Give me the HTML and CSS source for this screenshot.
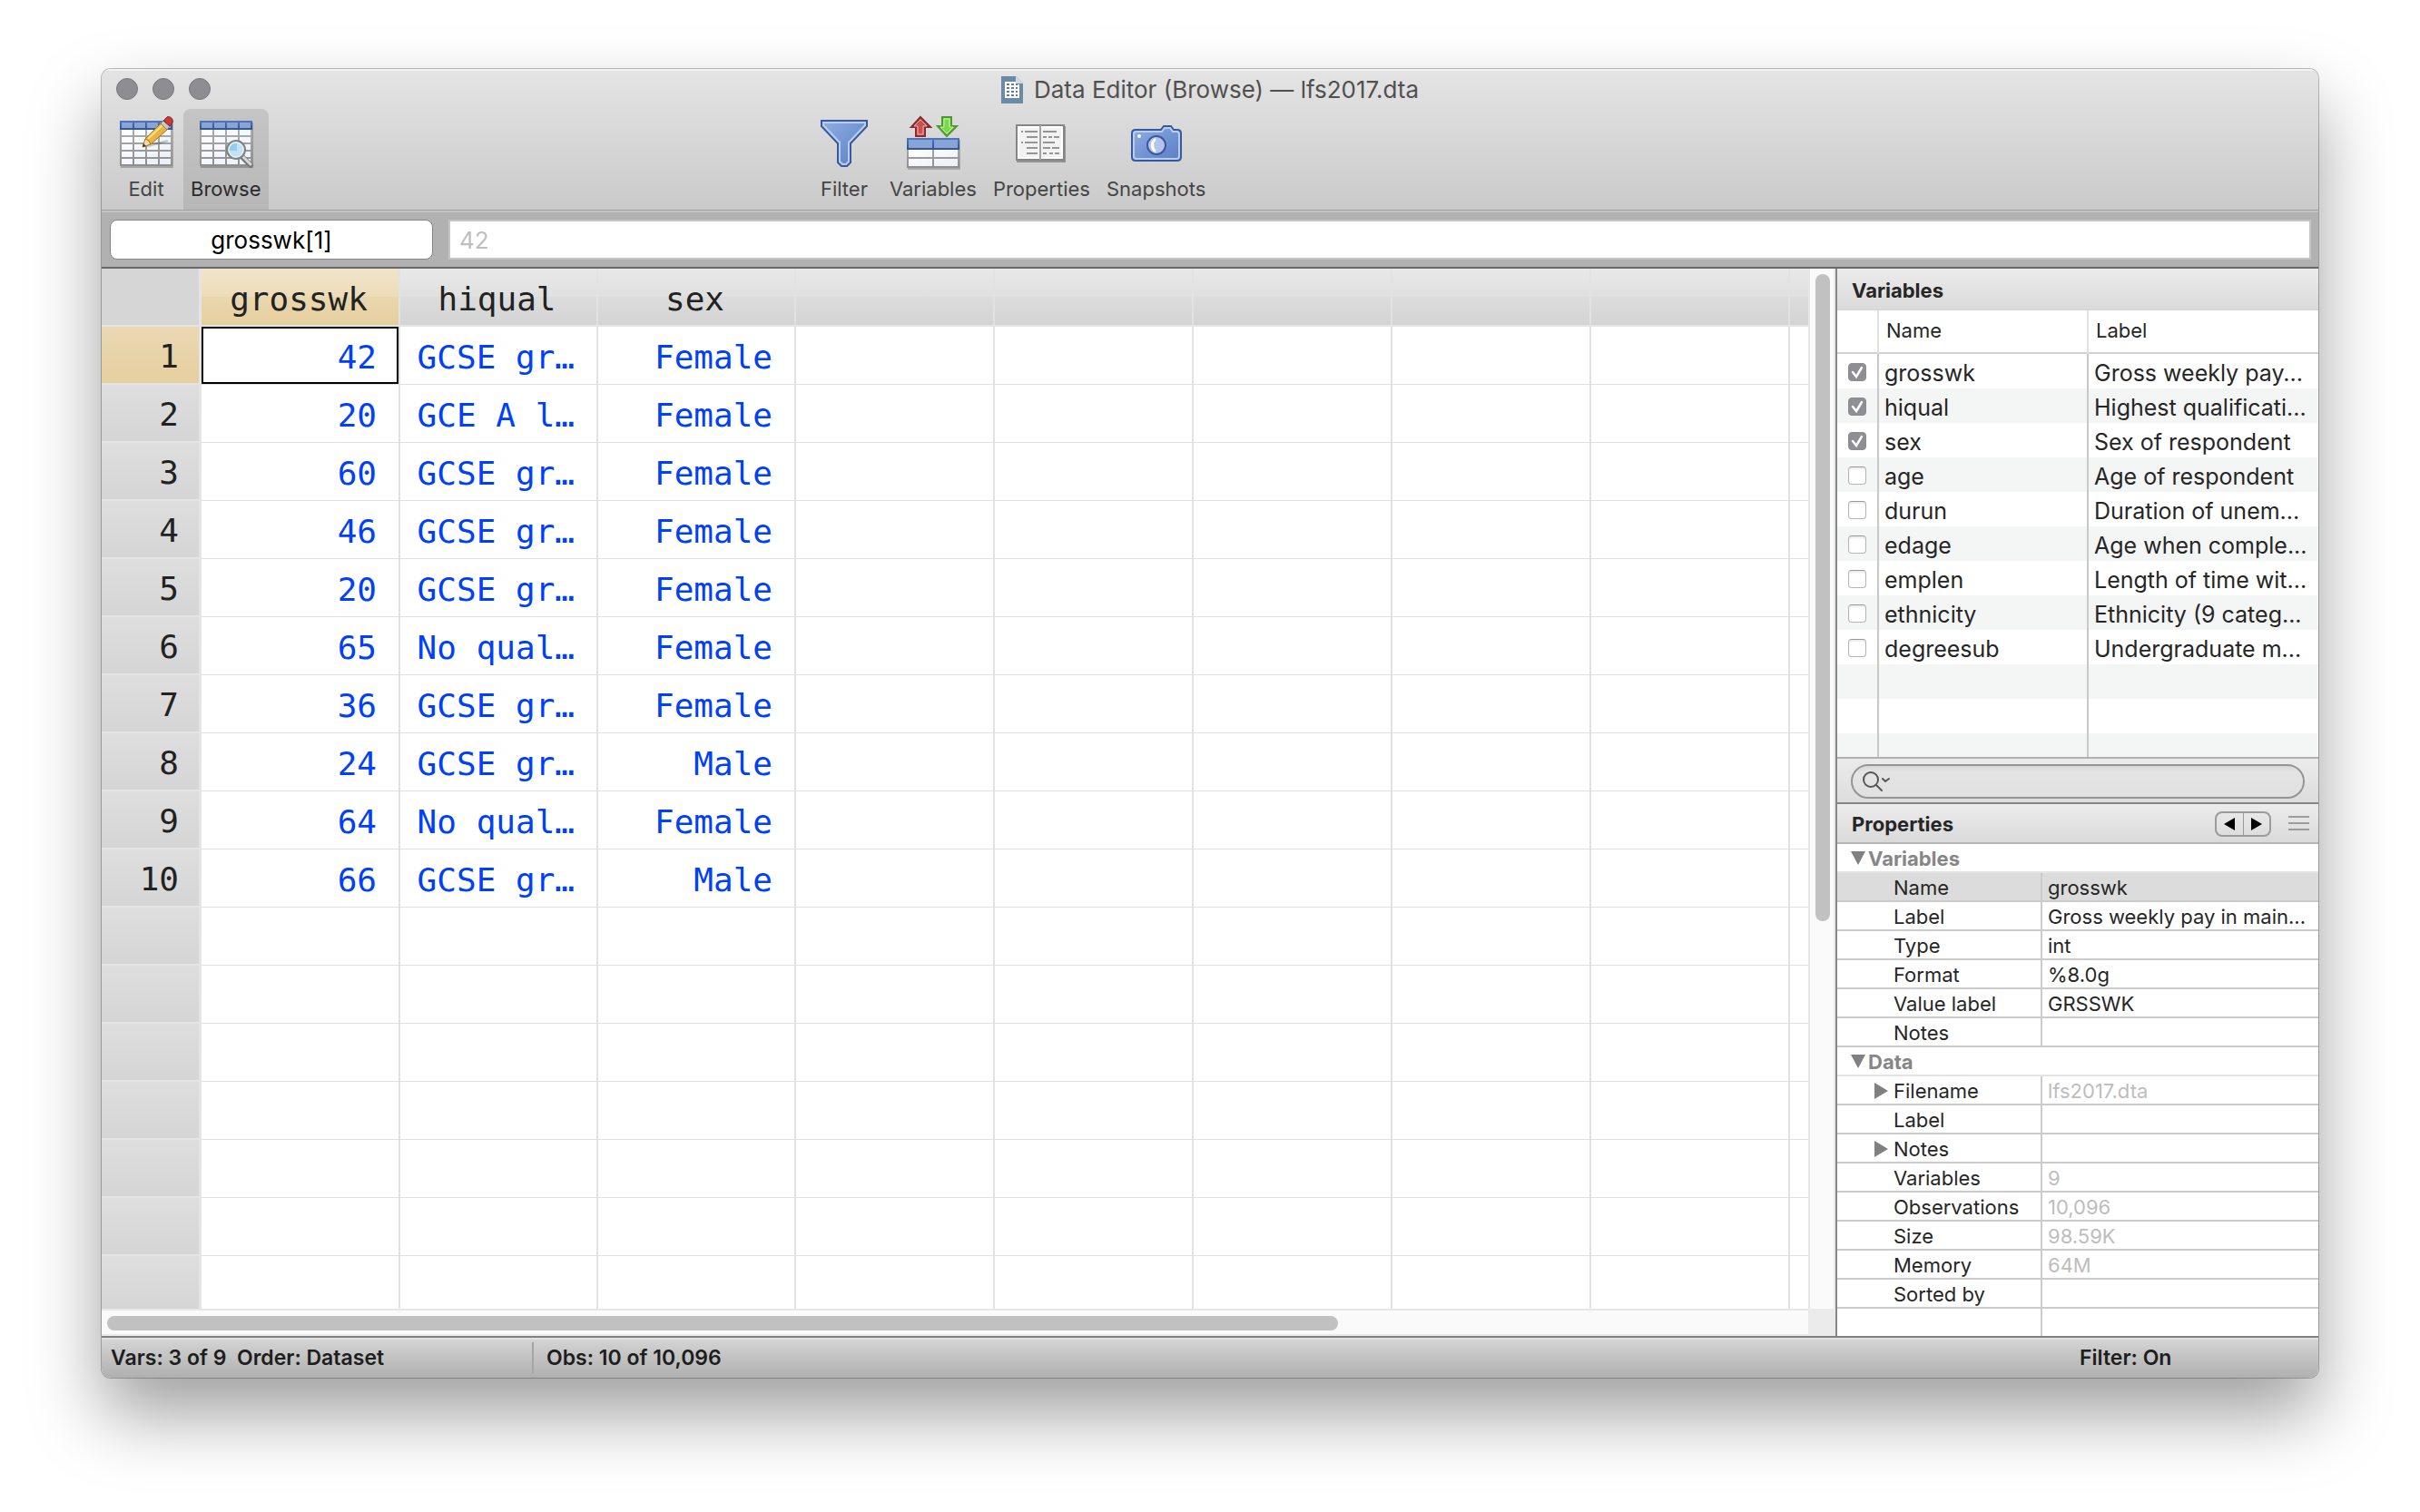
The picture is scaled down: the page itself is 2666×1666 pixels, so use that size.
FILE: index.html
```html
<!DOCTYPE html>
<html lang="en">
<head>
<meta charset="utf-8">
<title>Data Editor (Browse) — lfs2017.dta</title>
<link rel="stylesheet" href="styles.css">
</head>
<body>
<svg width="0" height="0" class="defs" aria-hidden="true">
  <defs>
    <linearGradient id="blue" x1="0" y1="0" x2="1" y2="1"><stop offset="0" stop-color="#8fafe4"/><stop offset="1" stop-color="#5a7cc4"/></linearGradient>
    <linearGradient id="cell" x1="0" y1="0" x2="1" y2="1"><stop offset="0" stop-color="#ffffff"/><stop offset="1" stop-color="#eaeff8"/></linearGradient>
    <linearGradient id="frame" x1="0" y1="0" x2="0" y2="1"><stop offset="0" stop-color="#b4b4b4"/><stop offset="1" stop-color="#8e8e8e"/></linearGradient>
    <linearGradient id="head" x1="0" y1="0" x2="0" y2="1"><stop offset="0" stop-color="#5476bd"/><stop offset="1" stop-color="#2d4f9d"/></linearGradient>
    <symbol id="sheet" viewBox="0 0 64 64">
      <rect x="4" y="11" width="58" height="50" fill="#000" opacity=".22"/>
      <rect x="3" y="9" width="58" height="50" fill="url(#frame)"/>
      <rect x="3" y="9" width="58" height="10" fill="url(#head)"/>
      <path d="M5 11h12v6H5zM19 11h12v6H19zM33 11h12v6H33zM47 11h12v6H47z" fill="#86a4d6"/>
      <path d="M5 19h12v6H5zM19 19h12v6H19zM33 19h12v6H33zM47 19h12v6H47zM5 27h12v6H5zM19 27h12v6H19zM33 27h12v6H33zM47 27h12v6H47zM5 35h12v6H5zM19 35h12v6H19zM33 35h12v6H33zM47 35h12v6H47zM5 43h12v6H5zM19 43h12v6H19zM33 43h12v6H33zM47 43h12v6H47zM5 51h12v6H5zM19 51h12v6H19zM33 51h12v6H33zM47 51h12v6H47z" fill="url(#cell)"/>
    </symbol>
  </defs>
</svg>

<main class="window">
  <header class="chrome">
    <div class="titlebar">
      <div class="lights"><button class="light" aria-label="Close"></button><button class="light" aria-label="Minimize"></button><button class="light" aria-label="Zoom"></button></div>
      <h1 class="title">
        <svg width="24" height="30" viewBox="0 0 24 30" aria-hidden="true"><path d="M0 0h16l8 8v22H0z" fill="#6a8ba7"/><path d="M16 0l8 8h-8z" fill="#d5dde4"/><path d="M4 6h12v3h4v15H4z" fill="#fff"/><path d="M6 9h3M11 9h3M16 9h2M6 13h3M11 13h3M16 13h2M6 17h3M11 17h3M16 17h2M6 21h3M11 21h3M16 21h2" stroke="#5f7f9b" stroke-width="2"/></svg>
        <span>Data Editor (Browse) — lfs2017.dta</span>
      </h1>
    </div>
    <nav class="toolbar">
      <button class="tool tool-edit">
        <svg class="icon" viewBox="0 0 64 64" aria-hidden="true"><use href="#sheet"/>
          <path d="M29 37l26-7 2 2-22 6z" fill="#000" opacity=".2"/>
          <path d="M28 38l3-9 4 1 2 5z" fill="#f3dfa0" stroke="#a07a28"/>
          <path d="M28 38l1-4 3 3z" fill="#4a3a1a"/>
          <path d="M31 29l17-17 7 7-18 16-2-4z" fill="#e9b43f" stroke="#a8761c"/>
          <path d="M34 29l16-15" stroke="#fbe08e" stroke-width="2"/>
          <path d="M48 12l3-3 7 6-3 4z" fill="#c9c9c9" stroke="#808080"/>
          <path d="M51 9l4-4c3-2 8 3 6 6l-3 4z" fill="#c63a3a" stroke="#8b1f22"/>
        </svg>
        <span>Edit</span>
      </button>
      <button class="tool tool-active" aria-pressed="true">
        <svg class="icon" viewBox="0 0 64 64" aria-hidden="true"><use href="#sheet"/>
          <path d="M50 49l9 9" stroke="#777" stroke-width="6" stroke-linecap="round"/>
          <path d="M50 48l9 9" stroke="#d8d8d8" stroke-width="3" stroke-linecap="round"/>
          <circle cx="43" cy="41" r="10" fill="#c3e3f5" stroke="#808080" stroke-width="2"/>
          <circle cx="43" cy="41" r="8" fill="none" stroke="#eef5fa" stroke-width="1"/>
          <path d="M36 42a7 7 0 0 1 8-8v8z" fill="#93cdee"/>
        </svg>
        <span>Browse</span>
      </button>
      <div class="space-lead"></div>
      <button class="tool">
        <svg class="icon" viewBox="0 0 64 64" aria-hidden="true">
          <path d="M7 9h50v6L39 34v21l-4 4h-6l-4-4V34L7 15z" fill="url(#blue)" stroke="#38599f" stroke-width="2"/>
          <path d="M9 11h46v3L37 33v21l-3 3h-4l-3-3V33L9 14z" fill="none" stroke="#b9cdf0" stroke-width="2"/>
        </svg>
        <span>Filter</span>
      </button>
      <button class="tool">
        <svg class="icon" viewBox="0 0 64 64" aria-hidden="true">
          <path d="M18 5L29 16h-6v10H13V16H8z" fill="#d85a5a" stroke="#8a2a2c" stroke-width="2"/><path d="M18 8l7 7h-4v9h-6v-9h-4z" fill="#c8504f" stroke="#f0b0b0"/>
          <path d="M47 26L58 15h-6V5H42v10h-5z" fill="#7fdc4f" stroke="#4f9a2c" stroke-width="2"/><path d="M47 23l7-7h-4V7h-6v9h-4z" fill="#79d94b" stroke="#c7f5a8"/>
          <rect x="4" y="30" width="58" height="33" fill="#000" opacity=".2"/>
          <rect x="3" y="28" width="58" height="33" fill="url(#frame)"/><rect x="3" y="28" width="58" height="13" fill="url(#head)"/>
          <path d="M5 30h26v9H5zM33 30h26v9H33z" fill="#86a4d6"/><path d="M5 41h26v8H5zM33 41h26v8H33zM5 51h26v8H5zM33 51h26v8H33z" fill="url(#cell)"/>
        </svg>
        <span>Variables</span>
      </button>
      <button class="tool">
        <svg class="icon" viewBox="0 0 64 64" aria-hidden="true">
          <rect x="5" y="15" width="54" height="40" fill="#000" opacity=".3"/>
          <rect x="5" y="14" width="52" height="38" fill="#f2f2f2" stroke="#858585" stroke-width="2"/><rect x="7" y="16" width="48" height="34" fill="none" stroke="#fff" stroke-width="2"/>
          <path d="M31 14v38" stroke="#a5a5a5" stroke-width="2"/>
          <path d="M10 21h2M14 21h14M16 27h12M10 33h2M14 33h14M16 39h12M16 45h12M34 21h15M34 27h4M40 27h4M46 27h6M34 33h13M34 39h8M44 39h8M34 45h4M41 45h4M47 45h5" stroke="#959595" stroke-width="2"/>
        </svg>
        <span>Properties</span>
      </button>
      <button class="tool">
        <svg class="icon" viewBox="0 0 64 64" aria-hidden="true">
          <path d="M9 19h28l3-4h8l3 4h4q4 0 4 4v26q0 4-4 4H9q-4 0-4-4V23q0-4 4-4z" fill="url(#blue)" stroke="#38599f" stroke-width="2"/>
          <path d="M10 21h28l3-4h6l3 4h4q3 0 3 3v24q0 3-3 3H10q-3 0-3-3V24q0-3 3-3z" fill="none" stroke="#b9cdf0" stroke-width="2"/>
          <circle cx="13" cy="26" r="2" fill="#fff"/><circle cx="32" cy="36" r="10" fill="#b3c6ea" stroke="#38599f" stroke-width="2"/><path d="M31 29a8 8 0 0 0 0 14a10 10 0 0 1 0-14z" fill="#fff" stroke="#fff" stroke-width="2"/>
        </svg>
        <span>Snapshots</span>
      </button>
      <div class="space-trail"></div>
    </nav>
  </header>

  <div class="formula">
    <input class="cell-name" aria-label="Cell" value="grosswk[1]">
    <input class="cell-value" aria-label="Value" value="42" readonly>
  </div>

  <div class="body">
    <section class="grid-area">
      <div class="grid-view">
        <table class="grid">
          <colgroup><col class="col-num"><col class="col-first"><col class="col-data"><col class="col-data"><col class="col-blank" span="6"></colgroup>
          <thead><tr><th></th><th class="selected">grosswk</th><th>hiqual</th><th>sex</th><th></th><th></th><th></th><th></th><th></th><th></th></tr></thead>
          <tbody>
            <tr><th class="selected">1</th><td class="cursor">42</td><td>GCSE gr…</td><td>Female</td><td></td><td></td><td></td><td></td><td></td><td></td></tr>
            <tr><th>2</th><td>20</td><td>GCE A l…</td><td>Female</td><td></td><td></td><td></td><td></td><td></td><td></td></tr>
            <tr><th>3</th><td>60</td><td>GCSE gr…</td><td>Female</td><td></td><td></td><td></td><td></td><td></td><td></td></tr>
            <tr><th>4</th><td>46</td><td>GCSE gr…</td><td>Female</td><td></td><td></td><td></td><td></td><td></td><td></td></tr>
            <tr><th>5</th><td>20</td><td>GCSE gr…</td><td>Female</td><td></td><td></td><td></td><td></td><td></td><td></td></tr>
            <tr><th>6</th><td>65</td><td>No qual…</td><td>Female</td><td></td><td></td><td></td><td></td><td></td><td></td></tr>
            <tr><th>7</th><td>36</td><td>GCSE gr…</td><td>Female</td><td></td><td></td><td></td><td></td><td></td><td></td></tr>
            <tr><th>8</th><td>24</td><td>GCSE gr…</td><td>Male</td><td></td><td></td><td></td><td></td><td></td><td></td></tr>
            <tr><th>9</th><td>64</td><td>No qual…</td><td>Female</td><td></td><td></td><td></td><td></td><td></td><td></td></tr>
            <tr><th>10</th><td>66</td><td>GCSE gr…</td><td>Male</td><td></td><td></td><td></td><td></td><td></td><td></td></tr>
            <tr><th></th><td></td><td></td><td></td><td></td><td></td><td></td><td></td><td></td><td></td></tr>
            <tr><th></th><td></td><td></td><td></td><td></td><td></td><td></td><td></td><td></td><td></td></tr>
            <tr><th></th><td></td><td></td><td></td><td></td><td></td><td></td><td></td><td></td><td></td></tr>
            <tr><th></th><td></td><td></td><td></td><td></td><td></td><td></td><td></td><td></td><td></td></tr>
            <tr><th></th><td></td><td></td><td></td><td></td><td></td><td></td><td></td><td></td><td></td></tr>
            <tr><th></th><td></td><td></td><td></td><td></td><td></td><td></td><td></td><td></td><td></td></tr>
            <tr><th></th><td></td><td></td><td></td><td></td><td></td><td></td><td></td><td></td><td></td></tr>
          </tbody>
        </table>
      </div>
      <div class="track-v"><div class="thumb-v"></div></div>
      <div class="track-h"><div class="thumb-h"></div></div>
      <div class="track-corner"></div>
    </section>

    <aside class="side">
      <h2 class="side-head">Variables</h2>
      <div class="list">
        <table class="vars">
          <colgroup><col class="col-check"><col class="col-name"><col></colgroup>
          <thead><tr><th></th><th><span>Name</span></th><th><span>Label</span></th></tr></thead>
          <tbody>
            <tr><td><input type="checkbox" id="v1" checked></td><td><label for="v1">grosswk</label></td><td>Gross weekly pay...</td></tr>
            <tr><td><input type="checkbox" id="v2" checked></td><td><label for="v2">hiqual</label></td><td>Highest qualificati...</td></tr>
            <tr><td><input type="checkbox" id="v3" checked></td><td><label for="v3">sex</label></td><td>Sex of respondent</td></tr>
            <tr><td><input type="checkbox" id="v4"></td><td><label for="v4">age</label></td><td>Age of respondent</td></tr>
            <tr><td><input type="checkbox" id="v5"></td><td><label for="v5">durun</label></td><td>Duration of unem...</td></tr>
            <tr><td><input type="checkbox" id="v6"></td><td><label for="v6">edage</label></td><td>Age when comple...</td></tr>
            <tr><td><input type="checkbox" id="v7"></td><td><label for="v7">emplen</label></td><td>Length of time wit...</td></tr>
            <tr><td><input type="checkbox" id="v8"></td><td><label for="v8">ethnicity</label></td><td>Ethnicity (9 categ...</td></tr>
            <tr><td><input type="checkbox" id="v9"></td><td><label for="v9">degreesub</label></td><td>Undergraduate m...</td></tr>
            <tr><td></td><td></td><td></td></tr>
            <tr><td></td><td></td><td></td></tr>
            <tr><td></td><td></td><td></td></tr>
          </tbody>
        </table>
      </div>
      <div class="search-bar">
        <label class="search">
          <svg width="32" height="26" viewBox="0 0 32 26" aria-hidden="true" fill="none" stroke="#555" stroke-width="2" stroke-linecap="round"><circle cx="10" cy="11" r="8"/><path d="M16 17l6 6"/><path d="M23 10l3 3 4-3"/></svg>
          <input type="search" aria-label="Search variables">
        </label>
      </div>
      <div class="side-head props-head">
        <h2>Properties</h2>
        <div class="pager">
          <button aria-label="Previous"><svg width="12" height="14" viewBox="0 0 12 14"><path d="M12 0v14L0 7z"/></svg></button><button aria-label="Next"><svg width="12" height="14" viewBox="0 0 12 14"><path d="M0 0v14l12-7z"/></svg></button>
        </div>
        <button class="menu" aria-label="Options"><svg width="23" height="17" viewBox="0 0 23 17"><path d="M0 1h23M0 8h23M0 15h23" stroke="#555"/></svg></button>
      </div>
      <table class="props">
        <colgroup><col class="col-prop"><col></colgroup>
        <tbody>
          <tr class="group"><th colspan="2"><i class="down"></i>Variables</th></tr>
          <tr class="current"><th>Name</th><td>grosswk</td></tr>
          <tr><th>Label</th><td>Gross weekly pay in main...</td></tr>
          <tr><th>Type</th><td>int</td></tr>
          <tr><th>Format</th><td>%8.0g</td></tr>
          <tr><th>Value label</th><td>GRSSWK</td></tr>
          <tr><th>Notes</th><td></td></tr>
          <tr class="group"><th colspan="2"><i class="down"></i>Data</th></tr>
          <tr class="fixed"><th class="nested"><i class="right"></i>Filename</th><td>lfs2017.dta</td></tr>
          <tr class="fixed"><th>Label</th><td></td></tr>
          <tr class="fixed"><th class="nested"><i class="right"></i>Notes</th><td></td></tr>
          <tr class="fixed"><th>Variables</th><td>9</td></tr>
          <tr class="fixed"><th>Observations</th><td>10,096</td></tr>
          <tr class="fixed"><th>Size</th><td>98.59K</td></tr>
          <tr class="fixed"><th>Memory</th><td>64M</td></tr>
          <tr class="fixed"><th>Sorted by</th><td></td></tr>
          <tr class="last"><th></th><td></td></tr>
        </tbody>
      </table>
    </aside>
  </div>

  <footer class="status">
    <span class="status-vars">Vars: 3 of 9  Order: Dataset</span>
    <span class="status-obs">Obs: 10 of 10,096</span>
    <span class="status-filter">Filter: On</span>
  </footer>
</main>
</body>
</html>
```

FILE: styles.css
```css
* { box-sizing: border-box; }

body {
  margin: 0;
  padding: 76px 112px 148px;
  height: 100vh;
  background: #fff;
  color: #262626;
  font: 22px/28px "Inter", sans-serif;
}

.defs { position: absolute; }

button {
  margin: 0;
  padding: 0;
  border: 0;
  background: none;
  color: inherit;
  font: inherit;
}

h1, h2 { margin: 0; }

table {
  border-collapse: separate;
  border-spacing: 0;
  table-layout: fixed;
}

.window {
  display: flex;
  flex-direction: column;
  height: 100%;
  border-radius: 10px;
  overflow: hidden;
  box-shadow: 0 0 0 1px rgba(0, 0, 0, .25), 0 40px 80px rgba(0, 0, 0, .38);
}

/* Title bar and toolbar */
.chrome {
  border-bottom: 1px solid #a0a0a0;
  background: linear-gradient(#e4e4e4, #cacaca);
  box-shadow: inset 0 2px #f2f2f2;
}

.titlebar {
  display: grid;
  grid-template-columns: 1fr auto 1fr;
  align-items: center;
  height: 44px;
}

.lights {
  display: flex;
  gap: 16px;
  padding-left: 16px;
}

.light {
  width: 24px;
  height: 24px;
  border: 1px solid #77767a;
  border-radius: 50%;
  background: #8e8d92;
}

.title {
  display: flex;
  align-items: center;
  gap: 12px;
  padding-top: 2px;
  color: #505050;
  font-size: 26px;
  font-weight: 400;
}

.toolbar {
  display: flex;
  padding: 0 30px 0 8px;
}

.tool {
  display: flex;
  flex-direction: column;
  align-items: center;
  gap: 6px;
  min-width: 78px;
  height: 111px;
  padding: 4px 9px 0;
  border-radius: 8px 8px 0 0;
  color: #454545;
}

.tool-active {
  padding: 4px 8px 0;
  background: linear-gradient(#c5c5c5, #b7b7b7);
  color: #2b2b2b;
}

.icon {
  width: 64px;
  height: 64px;
}

.space-lead { flex: 1; }
.space-trail { flex: 2; }

/* Cell reference and value */
.formula {
  display: flex;
  gap: 17px;
  padding: 8px 8px 8px 9px;
  border-top: 2px solid #c3c3c3;
  border-bottom: 2px solid #686868;
  background: #b1b1b1;
}

.formula input {
  height: 44px;
  outline: 0;
  background: #fff;
  font: 26px/32px "Inter", sans-serif;
}

.cell-name {
  width: 356px;
  border: 1px solid #858585;
  border-radius: 8px;
  color: #000;
  text-align: center;
}

.cell-value {
  flex: 1;
  padding: 0 10px;
  border: 2px solid #c3c3c3;
  color: #bfbfbf;
}

.body {
  display: flex;
  flex: 1;
  min-height: 0;
}

/* Data grid */
.grid-area {
  display: grid;
  flex: 1;
  grid-template: minmax(0, 1fr) 30px / minmax(0, 1fr) 30px;
  min-width: 0;
  background: #fff;
}

.grid-view { overflow: hidden; }

.grid {
  width: 2000px;
  font: 36px/40px "DejaVu Sans Mono", monospace;
}

.col-num { width: 110px; }
.col-first { width: 219px; }
.col-data { width: 218px; }
.col-blank { width: 219px; }

.grid th,
.grid td {
  height: 64px;
  padding: 4px 24px 0 0;
  border-right: 2px solid #e2e2e2;
  text-align: right;
  font-weight: 400;
  white-space: nowrap;
}

.grid td {
  border-bottom: 1px solid #e2e2e2;
  background: #fff;
  color: #0040f8;
}

.grid th {
  padding-right: 22px;
  border-bottom: 2px solid #e4e4e4;
  color: #222;
}

.grid thead th {
  padding: 6px 3px 0 0;
  background: linear-gradient(#e8e8e8, #e0e0e0 50%, #dcdcdc 50%, #d4d4d4);
  background-clip: padding-box;
  text-align: center;
}

.grid thead th:first-child { background: #d6d6d6; }

.grid tr th:first-child {
  border-right: 3px solid #e4e4e4;
}

.grid tbody th { background: linear-gradient(#dedede, #d5d5d5); }

.grid thead th.selected { background: linear-gradient(#f1e4ca, #ecdcb9 50%, #ead7ae 50%, #e6cf9e); }
.grid tbody th.selected { background: linear-gradient(#ead8b3, #e6cf9f); }
.grid td.cursor { box-shadow: inset 0 0 0 2px #000; }

.track-v {
  padding: 6px 6px 0 6px;
  border-left: 2px solid #e7e7e7;
  border-right: 2px solid #ebebeb;
  background: #fafafa;
}

.thumb-v {
  width: 16px;
  height: 62.5%;
  border-radius: 8px;
  background: #c1c1c1;
}

.track-h {
  padding: 6px 6px 0;
  border-top: 2px solid #e7e7e7;
  border-bottom: 2px solid #ebebeb;
  background: #fafafa;
}

.thumb-h {
  width: 72.6%;
  height: 16px;
  border-radius: 8px;
  background: #c1c1c1;
}

.track-corner { background: #ebebeb; }

/* Side panel */
.side {
  display: flex;
  flex: 0 0 532px;
  flex-direction: column;
  min-width: 0;
  border-left: 2px solid #868686;
  background: #fff;
}

.side-head {
  height: 46px;
  padding: 10px 16px 0;
  border-bottom: 1px solid #d0d0d0;
  background: linear-gradient(#ececec, #dadada);
  font-size: 22px;
  font-weight: 700;
}

.list {
  flex: 1;
  min-height: 0;
  overflow: hidden;
}

.vars {
  width: 100%;
  font-size: 25px;
}

.col-check { width: 46px; }
.col-name { width: 231px; }

.vars th {
  height: 48px;
  padding: 6px 0 8px;
  border-bottom: 2px solid #d2d2d2;
  font-size: 22px;
  font-weight: 400;
  text-align: left;
}

.vars th span {
  display: block;
  padding-left: 8px;
  line-height: 30px;
}

.vars th:not(:first-child) { box-shadow: -2px 0 #e2e2e2; }

.vars td {
  height: 38px;
  padding: 4px 0 0 6px;
  border-right: 2px solid #c8c8c8;
  line-height: 32px;
  white-space: nowrap;
}

.vars td:first-child { padding: 0 0 0 12px; }
.vars td:last-child { border-right: 0; }
.vars tbody tr:nth-child(even) { background: #f4f5f5; }

.vars input {
  display: block;
  width: 20px;
  height: 20px;
  margin: 2px 0 0;
  appearance: none;
  border: 1px solid #b5b5b5;
  border-top-color: #999;
  border-radius: 4px;
  background: #fff;
  box-shadow: inset 0 2px 2px #ececec;
}

.vars input:checked {
  border-color: #8d8c91;
  background: #8f8e93 url("data:image/svg+xml,%3Csvg xmlns='http://www.w3.org/2000/svg' viewBox='0 0 18 18'%3E%3Cpath d='M4 9l4 5 6-10' fill='none' stroke='white' stroke-width='2.5' stroke-linecap='round'/%3E%3C/svg%3E") center / 18px;
  box-shadow: none;
}

.search-bar {
  padding: 6px 15px 4px;
  border-top: 2px solid #b0b0b0;
  border-bottom: 2px solid #858585;
  background: linear-gradient(#ebebeb, #dcdcdc);
}

.search {
  display: flex;
  align-items: center;
  height: 38px;
  padding-left: 10px;
  border: 2px solid #959595;
  border-radius: 19px;
  background: linear-gradient(#d8d8d8, #e4e4e4 20%, #e0e0e0);
}

.search input {
  flex: 1;
  border: 0;
  outline: 0;
  background: none;
  font: inherit;
}

.props-head {
  display: flex;
  align-items: center;
  height: 44px;
  padding: 1px 10px 0 16px;
  border-bottom: 2px solid #b5b5b5;
}

.props-head h2 {
  flex: 1;
  font-size: 22px;
}

.pager {
  display: flex;
  width: 62px;
  height: 28px;
  border: 2px solid #9b9b9b;
  border-radius: 8px;
}

.pager button {
  display: flex;
  flex: 1;
  align-items: center;
  justify-content: center;
}

.pager button + button { border-left: 1px solid #9b9b9b; }

.menu {
  display: flex;
  margin-left: 19px;
}

.props { width: 100%; }
.col-prop { width: 226px; }

.props th,
.props td {
  height: 32px;
  padding: 2px 0 0 6px;
  border-bottom: 2px solid #cbcbcb;
  line-height: 28px;
  font-weight: 400;
  text-align: left;
  white-space: nowrap;
}

.props th {
  padding-left: 62px;
  border-right: 2px solid #cbcbcb;
}

.props .nested { padding-left: 41px; }

.props .group th {
  padding-left: 15px;
  border-right: 0;
  border-bottom-color: #e4e4e4;
  color: #868686;
  font-weight: 700;
}

.props .current { background: #dcdcdc; }
.props .fixed td { color: #bdbdbd; }

.props .last th,
.props .last td {
  height: 30px;
  border-bottom: 0;
}

.down {
  display: inline-block;
  margin-right: 3px;
  border: 8px solid transparent;
  border-top: 15px solid #808080;
  border-bottom: 0;
  vertical-align: 1px;
}

.right {
  display: inline-block;
  margin-right: 6px;
  border: 9px solid transparent;
  border-left: 15px solid #808080;
  border-right: 0;
  vertical-align: -1px;
}

/* Status bar */
.status {
  display: flex;
  align-items: center;
  height: 46px;
  border-top: 2px solid #808080;
  background: linear-gradient(#d5d5d5, #b0b0b0);
  box-shadow: inset 0 2px #e0e0e0;
  color: #1e1e1e;
  font-size: 23px;
  font-weight: 600;
  white-space: pre;
}

.status span { line-height: 34px; }

.status-vars {
  flex: 0 0 476px;
  padding-left: 10px;
  border-right: 2px solid #a5a5a5;
}

.status-obs {
  flex: 1;
  padding-left: 14px;
}

.status-filter { flex: 0 0 263px; }
```
